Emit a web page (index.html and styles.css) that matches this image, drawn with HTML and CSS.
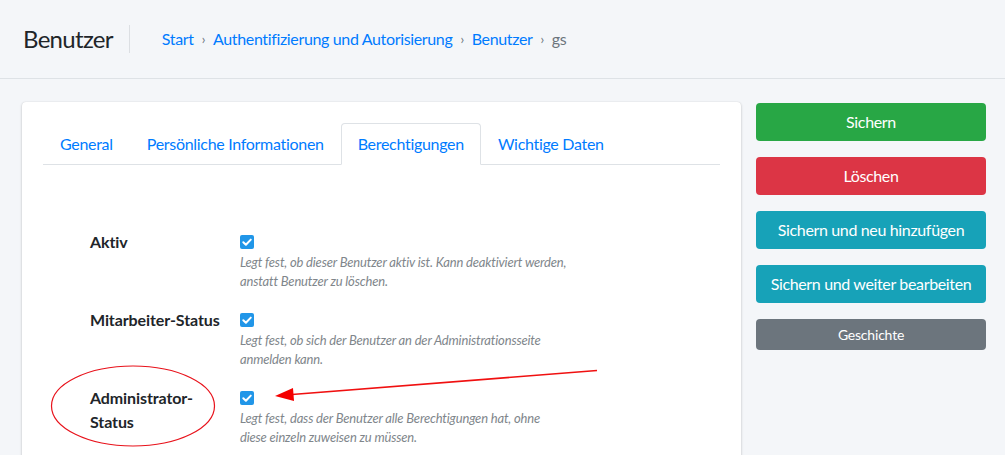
FILE: index.html
```html
<!DOCTYPE html>
<html lang="de">
<head>
<meta charset="utf-8">
<title>Benutzer</title>
<link rel="stylesheet" href="styles.css">
</head>
<body>
<header class="content-header">
  <h1 class="page-title">Benutzer</h1>
  <ol class="breadcrumb">
    <li><a href="#">Start</a></li>
    <li class="sep">›</li>
    <li><a href="#">Authentifizierung und Autorisierung</a></li>
    <li class="sep">›</li>
    <li><a href="#">Benutzer</a></li>
    <li class="sep">›</li>
    <li class="current">gs</li>
  </ol>
</header>
<main class="content">
  <section class="card">
    <ul class="tabs">
      <li class="tab"><a href="#">General</a></li>
      <li class="tab"><a href="#">Persönliche Informationen</a></li>
      <li class="tab active"><a href="#">Berechtigungen</a></li>
      <li class="tab"><a href="#">Wichtige Daten</a></li>
    </ul>
    <div class="tab-content">
      <div class="form-row">
        <label class="field-label">Aktiv</label>
        <div class="field">
          <div class="check-line"><span class="checkbox"><svg viewBox="0 0 14 14" width="14" height="14"><path d="M3.3 7.2 L5.9 9.7 L10.8 4.6" fill="none" stroke="#fff" stroke-width="2" stroke-linecap="round" stroke-linejoin="round"/></svg></span></div>
          <p class="help">Legt fest, ob dieser Benutzer aktiv ist. Kann deaktiviert werden,<br>anstatt Benutzer zu löschen.</p>
        </div>
      </div>
      <div class="form-row">
        <label class="field-label">Mitarbeiter-Status</label>
        <div class="field">
          <div class="check-line"><span class="checkbox"><svg viewBox="0 0 14 14" width="14" height="14"><path d="M3.3 7.2 L5.9 9.7 L10.8 4.6" fill="none" stroke="#fff" stroke-width="2" stroke-linecap="round" stroke-linejoin="round"/></svg></span></div>
          <p class="help">Legt fest, ob sich der Benutzer an der Administrationsseite<br>anmelden kann.</p>
        </div>
      </div>
      <div class="form-row">
        <label class="field-label">Administrator-<br>Status</label>
        <div class="field">
          <div class="check-line"><span class="checkbox"><svg viewBox="0 0 14 14" width="14" height="14"><path d="M3.3 7.2 L5.9 9.7 L10.8 4.6" fill="none" stroke="#fff" stroke-width="2" stroke-linecap="round" stroke-linejoin="round"/></svg></span></div>
          <p class="help">Legt fest, dass der Benutzer alle Berechtigungen hat, ohne<br>diese einzeln zuweisen zu müssen.</p>
        </div>
      </div>
    </div>
  </section>
  <aside class="actions">
    <button class="btn btn-success">Sichern</button>
    <button class="btn btn-danger">Löschen</button>
    <button class="btn btn-info">Sichern und neu hinzufügen</button>
    <button class="btn btn-info">Sichern und weiter bearbeiten</button>
    <button class="btn btn-secondary btn-sm">Geschichte</button>
  </aside>
</main>
<svg class="annotation" width="1005" height="455" viewBox="0 0 1005 455">
  <ellipse cx="133" cy="406" rx="81.5" ry="40" fill="none" stroke="#e8121b" stroke-width="1.2"/>
  <line x1="597" y1="370.5" x2="292" y2="394.5" stroke="#f01010" stroke-width="1.6"/>
  <polygon points="275,396 293,388 294,401" fill="#f40000"/>
</svg>
</body>
</html>
```
FILE: styles.css
```css
* { box-sizing: border-box; }
html, body { margin: 0; padding: 0; }
body {
  background: #f4f6f9;
  font-family: "Lato", "Noto Sans", sans-serif;
  color: #212529;
  width: 1005px;
  height: 455px;
  overflow: hidden;
  position: relative;
}
a { color: #007bff; text-decoration: none; }

.content-header {
  height: 79px;
  border-bottom: 1px solid #dee2e6;
  display: flex;
  align-items: center;
  padding: 0 0 0 23px;
}
.page-title {
  margin: 0;
  font-size: 24px;
  font-weight: 400;
  line-height: 28px;
  letter-spacing: -0.7px;
  padding-right: 16px;
  border-right: 1px solid #dcdfe3;
  height: 28px;
  color: #212529;
}
.breadcrumb {
  list-style: none;
  margin: 0 0 0 32px;
  padding: 0;
  display: flex;
  font-size: 16px;
  line-height: 24px;
  letter-spacing: -0.35px;
}
.breadcrumb .sep { color: #6c757d; padding: 0 8px; font-size: 13px; }
.breadcrumb .current { color: #6c757d; }

.content {
  display: flex;
  align-items: flex-start;
  padding: 23px 19px 0 22px;
  gap: 15px;
}
.card {
  width: 719px;
  flex: none;
  height: 360px;
  background: #fff;
  border-radius: 4px;
  box-shadow: 0 0 1px rgba(0,0,0,.125), 0 1px 3px rgba(0,0,0,.2);
  padding: 21px 21px 0 21px;
}
.tabs {
  list-style: none;
  margin: 0;
  padding: 0;
  display: flex;
  border-bottom: 1px solid #dee2e6;
}
.tab { margin-bottom: -1px; }
.tab a {
  display: block;
  padding: 8px 16px;
  border: 1px solid transparent;
  border-top-left-radius: 4px;
  border-top-right-radius: 4px;
  font-size: 16px;
  line-height: 24px;
  letter-spacing: -0.3px;
}
.tab.active a {
  border-color: #dee2e6 #dee2e6 #fff;
  background: #fff;
}
.tab-content { padding: 65px 0 0 47px; }
.form-row {
  display: flex;
  margin-bottom: 17px;
}
.field-label {
  width: 150px;
  flex: none;
  font-weight: 700;
  font-size: 16px;
  line-height: 24px;
  letter-spacing: -0.1px;
}
.field { flex: 1; }
.check-line { height: 23px; display: flex; align-items: center; }
.checkbox {
  width: 14px;
  height: 14px;
  border-radius: 2px;
  background: #2196e8;
  display: block;
}
.checkbox svg { display: block; }
.help {
  margin: 0;
  font-size: 13px;
  line-height: 19px;
  font-style: italic;
  letter-spacing: -0.17px;
  color: #80868b;
}

.actions {
  width: 230px;
  flex: none;
  display: flex;
  flex-direction: column;
  gap: 16px;
  margin-top: 1px;
}
.btn {
  display: block;
  width: 100%;
  height: 38px;
  border: 0;
  border-radius: 4px;
  color: #fff;
  font-family: inherit;
  font-size: 16px;
  line-height: 24px;
  letter-spacing: -0.35px;
  white-space: nowrap;
  padding: 7px 6px;
  cursor: pointer;
}
.btn-success { background: #28a745; }
.btn-danger { background: #dc3545; }
.btn-info { background: #17a2b8; }
.btn-secondary { background: #6c757d; }
.btn-sm { height: 31px; font-size: 14px; letter-spacing: -0.2px; padding: 4px 8px; }

.annotation {
  position: absolute;
  left: 0;
  top: 0;
  pointer-events: none;
}
```
